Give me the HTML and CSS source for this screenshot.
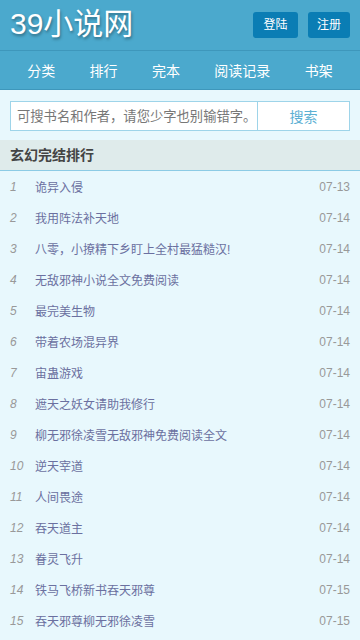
FILE: index.html
```html
<!DOCTYPE html>
<html lang="zh">
<head>
<meta charset="utf-8">
<title>39小说网</title>
<link rel="stylesheet" href="styles.css">
</head>
<body>
<header class="top">
  <div class="logo">39小说网</div>
  <div class="actions">
    <a class="btn">登陆</a>
    <a class="btn">注册</a>
  </div>
</header>
<nav class="nav">
  <a>分类</a><a>排行</a><a>完本</a><a>阅读记录</a><a>书架</a>
</nav>
<form class="search">
  <input class="search-input" type="text" placeholder="可搜书名和作者，请您少字也别输错字。">
  <button class="search-btn" type="button">搜索</button>
</form>
<h2 class="section">玄幻完结排行</h2>
<ul class="list">
  <li><span class="num">1</span><span class="title">诡异入侵</span><span class="date">07-13</span></li>
  <li><span class="num">2</span><span class="title">我用阵法补天地</span><span class="date">07-14</span></li>
  <li><span class="num">3</span><span class="title">八零，小撩精下乡盯上全村最猛糙汉!</span><span class="date">07-14</span></li>
  <li><span class="num">4</span><span class="title">无敌邪神小说全文免费阅读</span><span class="date">07-14</span></li>
  <li><span class="num">5</span><span class="title">最完美生物</span><span class="date">07-14</span></li>
  <li><span class="num">6</span><span class="title">带着农场混异界</span><span class="date">07-14</span></li>
  <li><span class="num">7</span><span class="title">宙蛊游戏</span><span class="date">07-14</span></li>
  <li><span class="num">8</span><span class="title">遮天之妖女请助我修行</span><span class="date">07-14</span></li>
  <li><span class="num">9</span><span class="title">柳无邪徐凌雪无敌邪神免费阅读全文</span><span class="date">07-14</span></li>
  <li><span class="num">10</span><span class="title">逆天宰道</span><span class="date">07-14</span></li>
  <li><span class="num">11</span><span class="title">人间畏途</span><span class="date">07-14</span></li>
  <li><span class="num">12</span><span class="title">吞天道主</span><span class="date">07-14</span></li>
  <li><span class="num">13</span><span class="title">眷灵飞升</span><span class="date">07-14</span></li>
  <li><span class="num">14</span><span class="title">铁马飞桥新书吞天邪尊</span><span class="date">07-15</span></li>
  <li><span class="num">15</span><span class="title">吞天邪尊柳无邪徐凌雪</span><span class="date">07-15</span></li>
</ul>
</body>
</html>
```
FILE: styles.css
```css
* { box-sizing: border-box; }
html, body { margin: 0; padding: 0; }
body {
  background: #e8f8fd;
  font-family: "Liberation Sans", Arial, "Noto Sans CJK SC", sans-serif;
  width: 360px;
  overflow: hidden;
}
.top {
  background: #4ba9cd;
  height: 51px;
  border-bottom: 1px solid #3e97bb;
  display: flex;
  align-items: center;
  justify-content: space-between;
  padding: 0 10px;
}
.logo {
  color: #fff;
  font-size: 30px;
  line-height: 1;
  text-shadow: 1px 2px 3px rgba(0,0,0,0.35);
  margin-top: -2px;
}
.actions { display: flex; gap: 10px; }
.btn {
  display: block;
  width: 45px;
  height: 26px;
  line-height: 26px;
  text-align: center;
  background: #0a7db4;
  color: #fff;
  font-size: 12px;
  border-radius: 3px;
}
.actions .btn + .btn { width: 42px; }
.nav {
  background: #4ba9cd;
  height: 39px;
  border-bottom: 1px solid #3e97bb;
  display: flex;
  justify-content: space-around;
  align-items: center;
  padding: 0 10px;
}
.nav a {
  color: #fff;
  font-size: 14px;
}
.search {
  margin: 11px 10px 0;
  display: flex;
  height: 30px;
  border: 1px solid #9ed4e9;
  background: #fff;
}
.search-input {
  flex: 0 0 247px;
  border: 0;
  border-right: 1px solid #9ed4e9;
  padding: 0 0 0 6px;
  font-family: inherit;
  font-size: 13.3px;
  outline: none;
  color: #666;
  background: #fff;
}
.search-input::placeholder { color: #777; }
.search-btn {
  flex: 1;
  border: 0;
  background: #fff;
  color: #5cb0d3;
  font-family: inherit;
  font-size: 14px;
  padding: 0;
}
.section {
  margin: 9px 0 0;
  height: 31px;
  background: #dfebeb;
  border-bottom: 1px solid #8ccbe5;
  font-size: 14px;
  font-weight: bold;
  color: #444;
  line-height: 30px;
  padding: 0 10px;
}
.list {
  list-style: none;
  margin: 0;
  padding: 0 10px;
}
.list li {
  display: flex;
  align-items: center;
  height: 31px;
  font-size: 12px;
}
.num {
  width: 25px;
  color: #999;
  font-style: italic;
}
.title {
  flex: 1;
  color: #6b70a0;
}
.date {
  color: #999;
}
```
